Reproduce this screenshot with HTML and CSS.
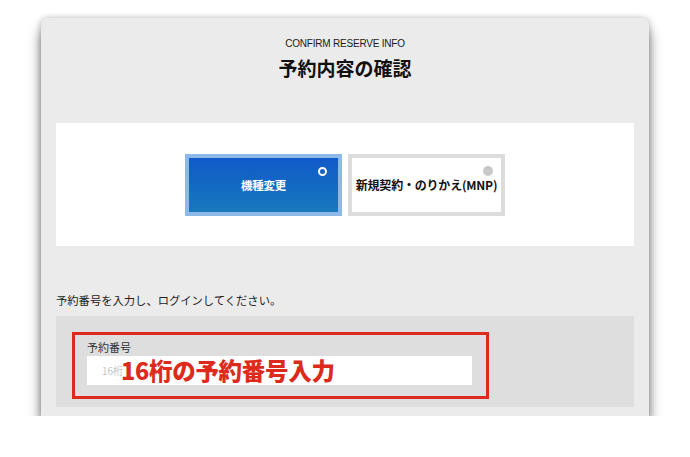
FILE: index.html
```html
<!DOCTYPE html>
<html lang="ja">
<head>
  <meta charset="UTF-8">
  <meta name="viewport" content="width=device-width, initial-scale=1.0">
  <title>予約内容の確認</title>
  <link rel="stylesheet" href="styles.css">
</head>
<body>
  <div class="panel">
    <div class="head">
      <p class="head-en">CONFIRM RESERVE INFO</p>
      <h1>予約内容の確認</h1>
    </div>

    <div class="choice-box">
      <div class="choice choice-active">
        <span class="dot"></span>
        <span class="choice-label">機種変更</span>
      </div>
      <div class="choice">
        <span class="dot"></span>
        <span class="choice-label">新規契約・のりかえ(MNP)</span>
      </div>
    </div>

    <p class="lead">予約番号を入力し、ログインしてください。</p>

    <div class="login-box">
      <div class="mark">
        <label class="field-label">予約番号</label>
        <div class="field">
          <span class="placeholder">16桁</span>
          <span class="note">16桁の予約番号入力</span>
        </div>
      </div>
    </div>
  </div>
</body>
</html>
```

FILE: styles.css
```css
body {
  margin: 0;
  background: #fff;
  font-family: "Liberation Sans", "Noto Sans CJK JP", sans-serif;
  color: #222;
  padding-top: 18px;
}

.panel {
  width: 578px;
  margin: 0 auto;
  padding: 0 15px 9px;
  background: #ebebeb;
  border-radius: 6px 6px 0 0;
  box-shadow: 0 11px 13px rgba(0, 0, 0, 0.5), 0 0 6px rgba(0, 0, 0, 0.25);
}

.head {
  text-align: center;
  padding-top: 20px;
}

.head-en {
  margin: 0;
  font-size: 10px;
  line-height: 12px;
  color: #1a1a1a;
  letter-spacing: -0.2px;
}

.head h1 {
  margin: 5px 0 0;
  font-size: 19px;
  line-height: 26px;
  font-weight: bold;
  font-family: "Noto Sans CJK JP", sans-serif;
  color: #111;
}

.choice-box {
  margin-top: 42px;
  height: 123px;
  background: #fff;
  display: flex;
  justify-content: center;
  align-items: center;
  gap: 6px;
}

.choice {
  position: relative;
  box-sizing: border-box;
  width: 157px;
  height: 62px;
  border: 4px solid #dcdcdc;
  background: #fff;
  display: flex;
  align-items: center;
  justify-content: center;
  font-family: "Noto Sans CJK JP", sans-serif;
  font-size: 12px;
  font-weight: bold;
  color: #111;
  white-space: nowrap;
  letter-spacing: -0.2px;
}

.choice-active {
  border-color: #8db9e8;
  background: linear-gradient(to bottom, #105ac9, #1879bd);
  color: #fff;
  font-size: 11.5px;
}

.dot {
  position: absolute;
  top: 8px;
  right: 8px;
  width: 10px;
  height: 10px;
  border-radius: 50%;
  background: #c8c8c8;
}

.choice-active .dot {
  top: 9px;
  right: 11px;
  box-sizing: border-box;
  width: 9px;
  height: 9px;
  background: transparent;
  border: 2px solid #fff;
}

.lead {
  margin: 48px 0 9px;
  font-family: "Noto Sans CJK JP", sans-serif;
  font-size: 11.3px;
  line-height: 13px;
  color: #222;
}

.login-box {
  background: #dedede;
  padding: 16px 16px 8px;
}

.mark {
  width: 385px;
  border: 3px solid #dd2a1c;
  padding: 6px 14px 11px 12px;
}

.field-label {
  display: block;
  font-family: "Noto Sans CJK JP", sans-serif;
  font-size: 11px;
  line-height: 13px;
  color: #333;
  margin-bottom: 2px;
}

.field {
  position: relative;
  height: 29px;
  background: #fff;
  display: flex;
  align-items: center;
  padding-left: 15px;
}

.placeholder {
  font-family: "Noto Sans CJK JP", sans-serif;
  font-size: 10px;
  color: #c4c4c4;
}

.note {
  position: absolute;
  left: 34px;
  top: -1px;
  font-family: "Noto Sans CJK JP", sans-serif;
  font-size: 23.5px;
  line-height: 30px;
  font-weight: 900;
  color: #dd2a1c;
  letter-spacing: -0.3px;
}
```
